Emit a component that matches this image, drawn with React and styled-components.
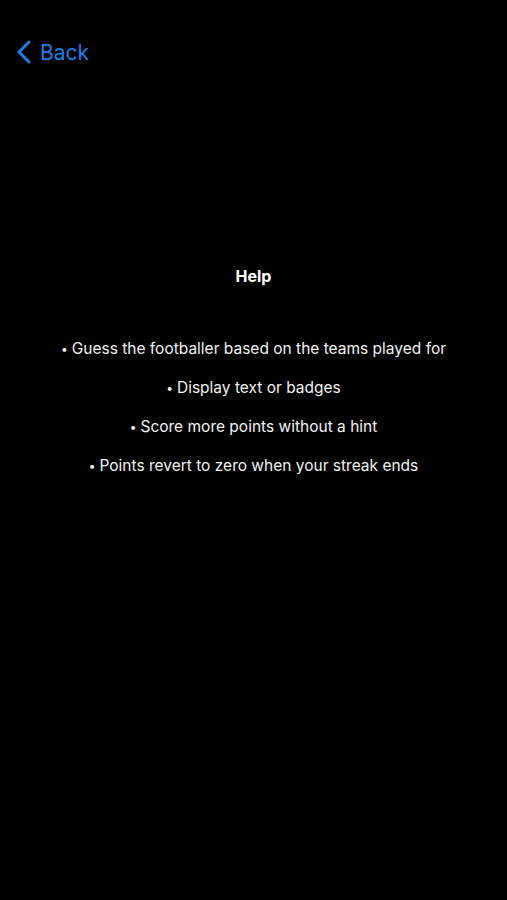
import styled, { createGlobalStyle } from "styled-components";

const GlobalStyle = createGlobalStyle`
  html, body {
    margin: 0;
    padding: 0;
    background: #000;
  }
  body {
    font-family: Inter, "Noto Sans", sans-serif;
  }
`;

const Screen = styled.div`
  width: 507px;
  height: 900px;
  background: #000;
  color: #fff;
  display: flex;
  flex-direction: column;
`;

const NavBar = styled.div`
  display: flex;
  align-items: center;
  padding: 37px 16px 0;
  height: 30px;
`;

const BackButton = styled.button`
  display: flex;
  align-items: center;
  gap: 8px;
  background: none;
  border: none;
  padding: 0;
  color: #1a7ee6;
  font-family: Inter, "Noto Sans", sans-serif;
  font-size: 21px;
  cursor: pointer;
`;

const Content = styled.div`
  display: flex;
  flex-direction: column;
  align-items: center;
  padding-top: 199px;
`;

const Title = styled.h3`
  margin: 0;
  font-size: 16px;
  font-weight: 700;
  line-height: 20px;
`;

const List = styled.ul`
  list-style: none;
  margin: 53px 0 0;
  padding: 0;
  display: flex;
  flex-direction: column;
  align-items: center;
  gap: 19px;
`;

const Item = styled.li`
  font-size: 15.5px;
  line-height: 20px;
  color: #f2f2f2;
`;

const Bullet = styled.span`
  font-size: 12px;
  margin-right: 4px;
  vertical-align: 1px;
`;

const tips = [
  "Guess the footballer based on the teams played for",
  "Display text or badges",
  "Score more points without a hint",
  "Points revert to zero when your streak ends",
];

export default function App() {
  return (
    <Screen>
      <GlobalStyle />
      <NavBar>
        <BackButton>
          <svg width="16" height="24" viewBox="0 0 16 24" fill="none">
            <path
              d="M13 2 L3 12 L13 22"
              stroke="#1a7ee6"
              strokeWidth="3"
              strokeLinecap="round"
              strokeLinejoin="round"
            />
          </svg>
          Back
        </BackButton>
      </NavBar>
      <Content>
        <Title>Help</Title>
        <List>
          {tips.map((t) => (
            <Item key={t}>
              <Bullet>•</Bullet>
              {t}
            </Item>
          ))}
        </List>
      </Content>
    </Screen>
  );
}
